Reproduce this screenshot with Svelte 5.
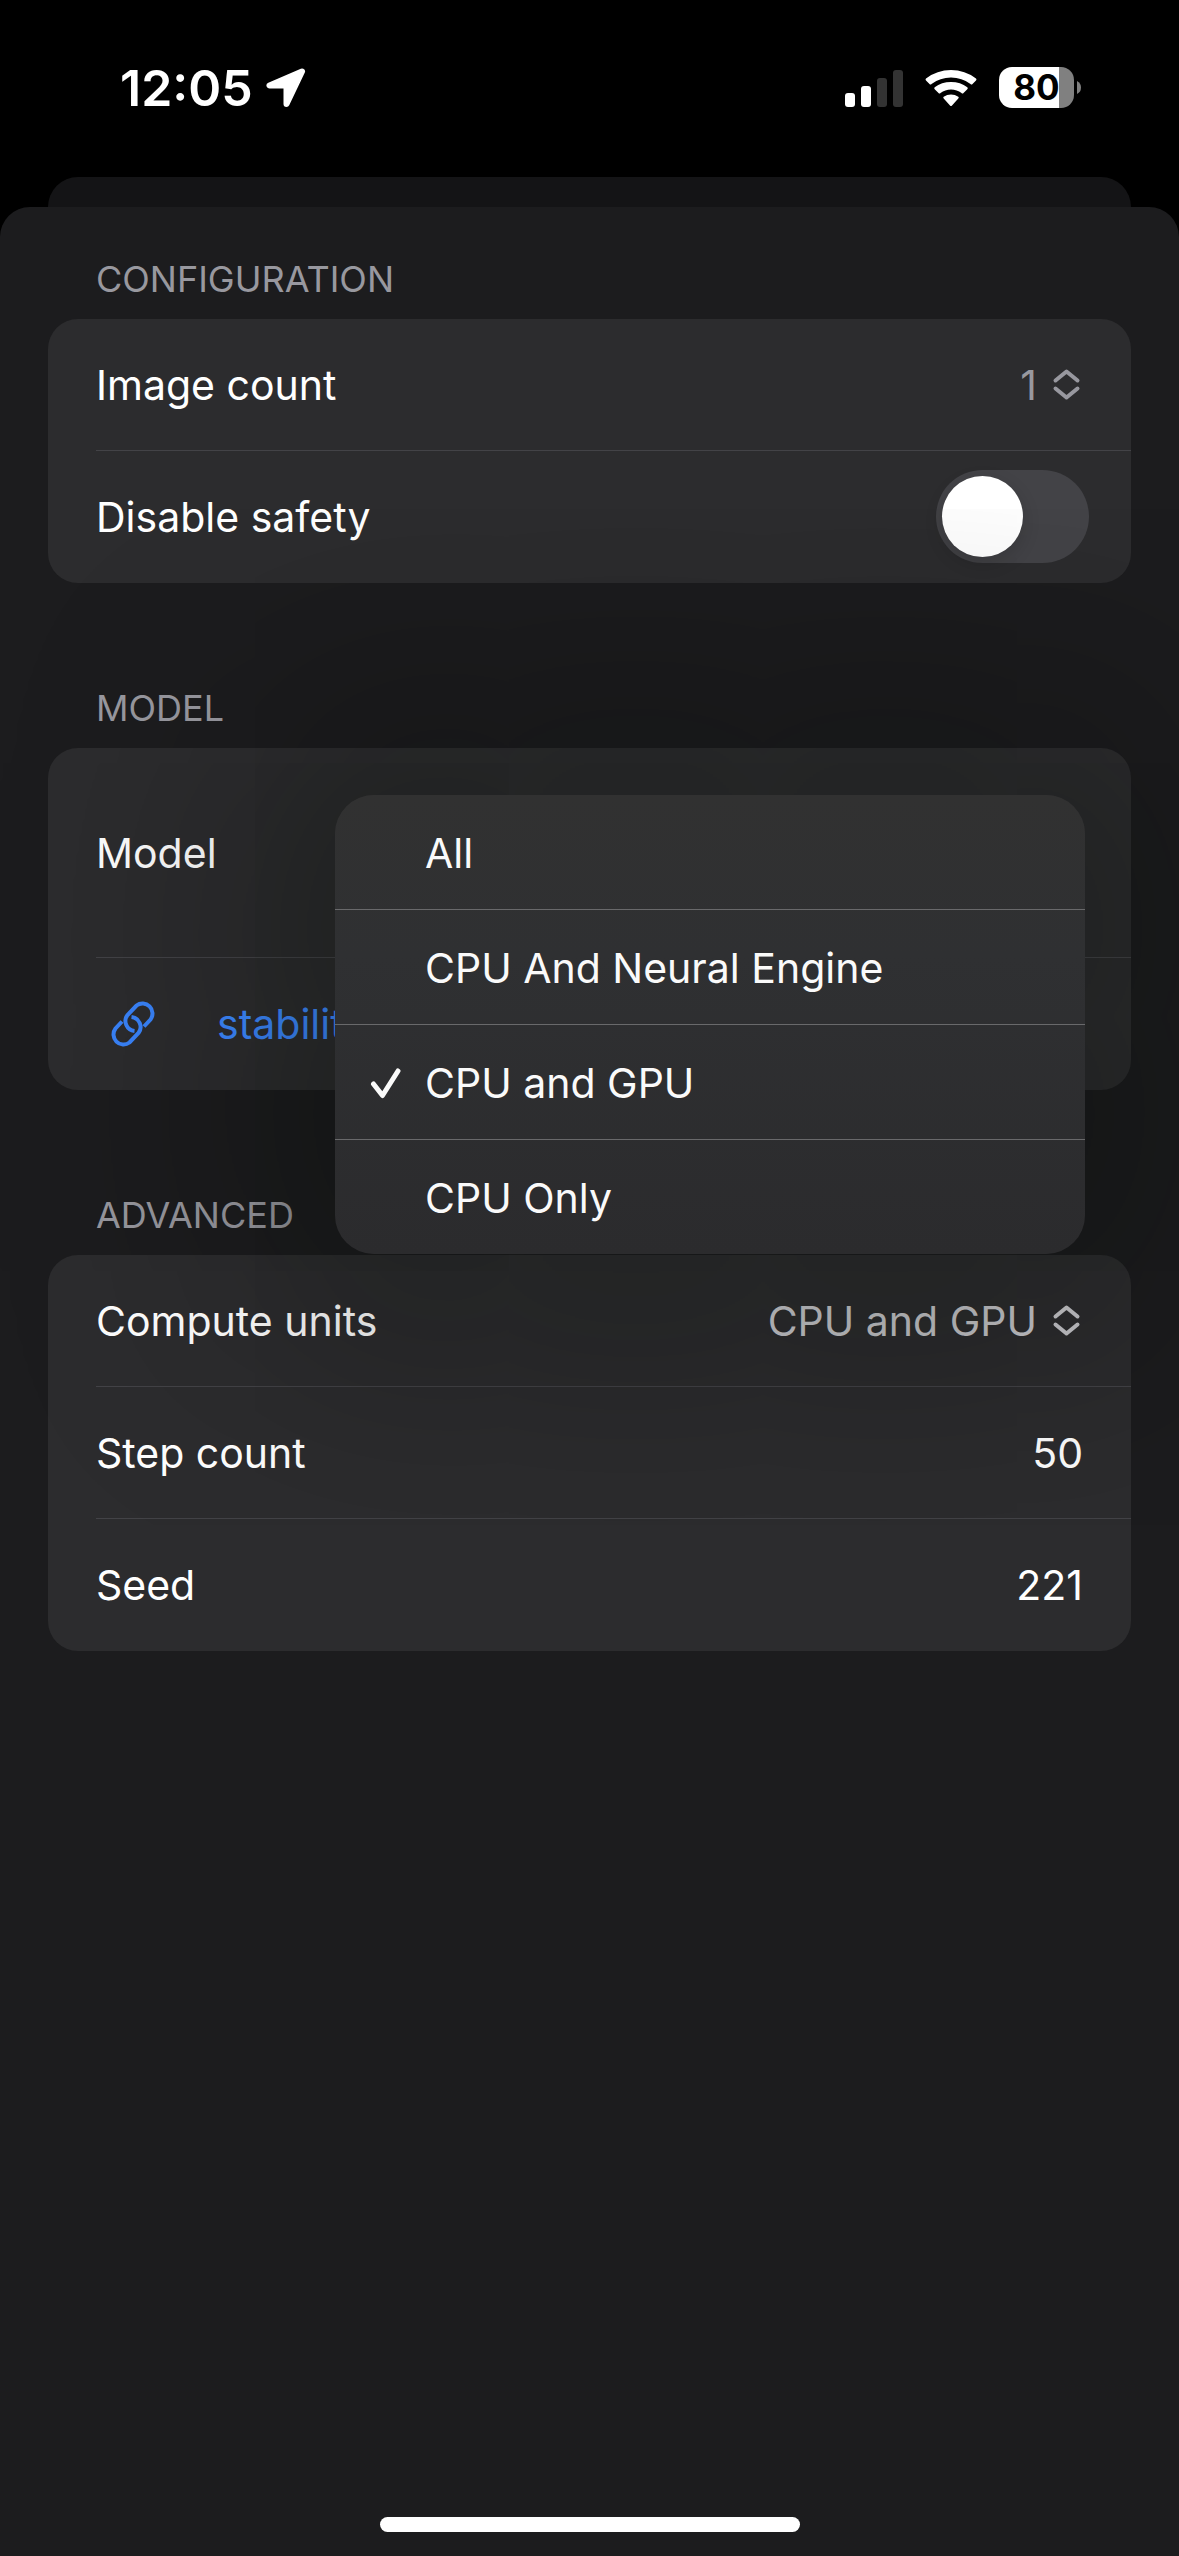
<script>
  let imageCount = "1";
  let disableSafety = false;
  let stepCount = "50";
  let seed = "221";

  let units = ["All", "CPU And Neural Engine", "CPU and GPU", "CPU Only"];
  let selected = "CPU and GPU";
  let menuOpen = true;

  function choose(unit) {
    selected = unit;
    menuOpen = false;
  }
</script>

<div class="screen">
  <header class="status">
    <div class="status-left">
      <span class="time">12:05</span>
      <svg width="40" height="40" viewBox="0 0 40 40" aria-hidden="true">
        <path d="M36 3.500L3.500 17.500H20.500V36Z" fill="#fff" stroke="#fff" stroke-width="6" stroke-linejoin="round" />
      </svg>
    </div>
    <div class="status-right">
      <svg width="58" height="38" viewBox="0 0 58 38" aria-hidden="true">
        <rect x="0" y="24" width="10" height="14" rx="3" fill="#fff" />
        <rect x="16" y="17" width="10" height="21" rx="3" fill="#fff" />
        <rect x="32" y="9" width="10" height="29" rx="3" fill="#333" />
        <rect x="48" y="1" width="10" height="37" rx="3" fill="#333" />
      </svg>
      <svg width="52" height="38" viewBox="0 0 52 38" aria-hidden="true">
        <path d="M1 11.500Q0 10.500 1 9.500Q12 1 26 1T51 9.500Q52 10.500 51 11.500L47.500 15Q46.500 16 45.500 15Q37 8.500 26 8.500T6.500 15Q5.500 16 4.500 15Z" fill="#fff" />
        <path d="M9.700 20.300Q8.700 19.300 9.700 18.300Q16.500 13 26 13T42.300 18.300Q43.300 19.300 42.300 20.300L38.500 24Q37.500 25 36.500 24Q32 20.500 26 20.500T15.500 24Q14.500 25 13.500 24Z" fill="#fff" />
        <path d="M18.700 29.500Q17.700 28.500 18.700 27.700Q22 25.500 26 25.500T33.300 27.700Q34.300 28.500 33.300 29.500L27 36.500Q26 37.500 25 36.500Z" fill="#fff" />
      </svg>
      <div class="battery">
        <span class="level">80</span>
        <svg class="nub" width="4" height="13" viewBox="0 0 4 13" aria-hidden="true">
          <path d="M0 0Q4 2 4 6.500T0 13Z" fill="#808080" />
        </svg>
      </div>
    </div>
  </header>

  <div class="back-sheet"></div>

  <main class="sheet">
    <section>
      <h2>CONFIGURATION</h2>
      <div class="card">
        <div class="row">
          <label for="image-count">Image count</label>
          <div class="picker">
            <select id="image-count" bind:value={imageCount}>
              <option>1</option>
              <option>2</option>
              <option>3</option>
              <option>4</option>
            </select>
            <svg width="33" height="33" viewBox="0 0 33 33" aria-hidden="true">
              <path d="M5.500 12.500L16.500 3.500L27.500 12.500M5.500 20.500L16.500 29.500L27.500 20.500" />
            </svg>
          </div>
        </div>
        <div class="row">
          <label for="disable-safety">Disable safety</label>
          <input id="disable-safety" class="switch" type="checkbox" bind:checked={disableSafety} />
        </div>
      </div>
    </section>

    <section>
      <h2>MODEL</h2>
      <div class="card">
        <div class="row tall">
          <span>Model</span>
        </div>
        <div class="row link-row">
          <svg width="48" height="48" viewBox="0 0 48 48" aria-hidden="true">
            <g fill="none" stroke="#3a84fb" stroke-width="4">
              <path d="M13 21.500L6.500 28.500A10 10 0 0 0 20.500 42.500L29.500 33A10 10 0 0 0 22.500 17" />
              <path d="M35 26.500L41.500 19.500A10 10 0 0 0 27.500 5.500L18.500 15A10 10 0 0 0 25.500 31" />
            </g>
          </svg>
          <a href="#model">stability</a>
        </div>
      </div>
    </section>

    <section>
      <h2>ADVANCED</h2>
      <div class="card">
        <div class="row">
          <span id="units-label">Compute units</span>
          <button
            class="picker units"
            aria-haspopup="menu"
            aria-expanded={menuOpen}
            aria-labelledby="units-label"
            on:click={() => (menuOpen = !menuOpen)}
          >
            <span>{selected}</span>
            <svg width="33" height="33" viewBox="0 0 33 33" aria-hidden="true">
              <path d="M5.500 12.500L16.500 3.500L27.500 12.500M5.500 20.500L16.500 29.500L27.500 20.500" />
            </svg>
          </button>
        </div>
        <div class="row">
          <label for="step-count">Step count</label>
          <input id="step-count" class="value" type="text" inputmode="numeric" bind:value={stepCount} />
        </div>
        <div class="row">
          <label for="seed">Seed</label>
          <input id="seed" class="value" type="text" inputmode="numeric" bind:value={seed} />
        </div>

        {#if menuOpen}
          <div class="menu" role="menu" aria-labelledby="units-label">
            {#each units as unit}
              <button role="menuitemradio" aria-checked={unit === selected} on:click={() => choose(unit)}>
                <span class="tick">
                  {#if unit === selected}
                    <svg width="36" height="32" viewBox="0 0 36 32" aria-hidden="true">
                      <path d="M6.500 17L15.500 28.500L31 4" fill="none" stroke="#fafafa" stroke-width="5" stroke-linecap="round" stroke-linejoin="round" />
                    </svg>
                  {/if}
                </span>
                {unit}
              </button>
            {/each}
          </div>
        {/if}
      </div>
    </section>

    <div class="home"></div>
  </main>
</div>

<style>
  :global(body) {
    background: #000;
  }

  .screen {
    display: flex;
    flex-direction: column;
    min-height: 100vh;
    overflow: hidden;
    background: #000;
    color: #fff;
    font-family: Inter, "Liberation Sans", sans-serif;
    font-size: 41px;
    line-height: 52px;
  }

  /* status bar */
  .status {
    display: flex;
    justify-content: space-between;
    align-items: center;
    height: 177px;
    padding: 0 98px 2px 120px;
    box-sizing: border-box;
  }

  .status-left,
  .status-right {
    display: flex;
    align-items: center;
  }

  .status-left {
    gap: 13px;
  }

  .status-right {
    gap: 22px;
  }

  .time {
    font-size: 50px;
    font-weight: 600;
  }

  .battery {
    display: flex;
    align-items: center;
    gap: 3px;
  }

  .level {
    width: 75px;
    height: 41px;
    box-sizing: border-box;
    border-radius: 13px;
    background: linear-gradient(to right, #fff 80%, #808080 80%);
    color: #000;
    font-size: 35px;
    line-height: 41px;
    font-weight: 700;
    text-align: center;
  }

  /* sheets */
  .back-sheet {
    height: 30px;
    margin: 0 48px;
    border-radius: 30px 30px 0 0;
    background: #141416;
  }

  .sheet {
    flex: 1;
    display: flex;
    flex-direction: column;
    padding: 46px 48px 24px;
    border-radius: 30px 30px 0 0;
    background: #1c1c1e;
  }

  section {
    margin-bottom: 99px;
  }

  h2 {
    margin: 0;
    padding: 0 48px 14px;
    color: #98989f;
    font-size: 36px;
    line-height: 52px;
    font-weight: 400;
  }

  .card {
    position: relative;
    border-radius: 30px;
    background: #2c2c2e;
  }

  .row {
    display: flex;
    align-items: center;
    justify-content: space-between;
    height: 132px;
    margin-left: 48px;
    padding-right: 48px;
    box-sizing: border-box;
    border-bottom: 1px solid #434347;
  }

  .row:last-of-type,
  .row:has(+ .menu) {
    border-bottom-color: transparent;
  }

  .row.tall {
    height: 210px;
  }

  .link-row {
    justify-content: flex-start;
    gap: 60px;
    padding-left: 13px;
  }

  a {
    color: #3c88ff;
    text-decoration: none;
  }

  .picker {
    display: flex;
    align-items: center;
    gap: 13px;
    color: #98989f;
  }

  .picker path {
    fill: none;
    stroke: currentColor;
    stroke-width: 4;
    stroke-linecap: round;
    stroke-linejoin: round;
  }

  .picker.units {
    color: #c8c8cc;
  }

  button,
  select,
  .value {
    padding: 0;
    border: 0;
    background: none;
    font: inherit;
    color: inherit;
    outline: none;
  }

  select {
    appearance: none;
    width: 60px;
    text-align: right;
    text-align-last: right;
  }

  option {
    color: #000;
  }

  .value {
    width: 300px;
    text-align: right;
  }

  .switch {
    appearance: none;
    display: flex;
    width: 153px;
    height: 93px;
    margin: 0 -6px 0 0;
    padding: 6px;
    box-sizing: border-box;
    border-radius: 47px;
    background: #434347;
  }

  .switch::before {
    content: "";
    width: 81px;
    height: 81px;
    border-radius: 50%;
    background: #fff;
    box-shadow: 0 6px 18px rgba(0, 0, 0, 0.15);
  }

  .switch:checked {
    justify-content: flex-end;
    background: #30d158;
  }

  /* popup menu */
  .menu {
    position: absolute;
    right: 46px;
    bottom: calc(100% + 1px);
    z-index: 1;
    width: 750px;
    border-radius: 39px;
    background: linear-gradient(#313131, #2f3032 35%, #2b2b2d);
    box-shadow: 0 0 240px 100px rgba(0, 6, 0, 0.3);
    color: #fafafa;
  }

  .menu button {
    display: flex;
    align-items: center;
    width: 100%;
    height: 114px;
    padding: 2px 32px 0;
    text-align: left;
  }

  .menu button + button {
    height: 115px;
    border-top: 1px solid #69696b;
  }

  .tick {
    display: flex;
    width: 58px;
  }

  .home {
    align-self: center;
    width: 420px;
    height: 15px;
    margin-top: auto;
    border-radius: 8px;
    background: #fff;
  }
</style>
